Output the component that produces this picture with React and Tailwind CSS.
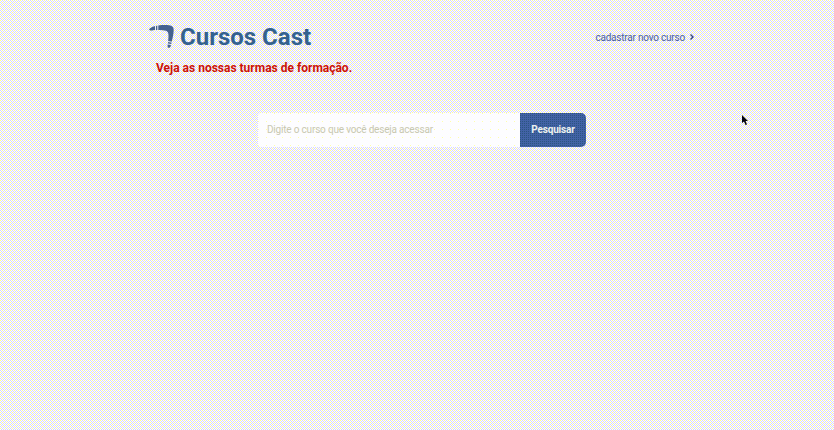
import React from "react";

const grain =
  "bg-white bg-[image:conic-gradient(from_0deg_at_1px_1px,transparent_75%,#ffff90_0),conic-gradient(from_0deg_at_1px_1px,transparent_75%,#ffff90_0),conic-gradient(from_0deg_at_1px_1px,transparent_75%,#d5d5ff_0),conic-gradient(from_0deg_at_1px_1px,transparent_75%,#d5d5ff_0)] bg-[size:4px_4px,4px_4px,2px_2px,2px_2px] bg-[position:0_0,2px_2px,0_0,1px_1px]";

const fieldGrain =
  "bg-[#fdfdff] bg-[image:conic-gradient(from_0deg_at_1px_1px,transparent_75%,#ffffaa_0)] bg-[size:8px_8px]";

const buttonGrain =
  "bg-[#4262a6] bg-[image:conic-gradient(from_0deg_at_1px_1px,transparent_75%,#2b5580_0)] bg-[size:2px_2px]";

function Boomerang() {
  return (
    <svg viewBox="0 0 26 26" className="h-[26px] w-[26px] shrink-0" aria-hidden="true">
      <path
        d="M.3 5.100C2 3.300 5 2 9 1.500c4-.5 8-.6 11-.3 3.200.3 4.700 1.900 4.700 4.800-.1 5-1.600 10.500-3.100 16.400-.6 2-3.200 1.800-3-.2.4-4.700 1.200-8.900.8-12.200-.3-2.500-1.600-3.500-3.900-3.600C11 6.100 6.500 5.800 2.800 6.400 1.200 6.700 0 6.500 .3 5.100Z"
        fill="#45628f"
      />
      <path d="M6.500 1.500v5M8.800 1v5.300M18.300 17.400l5.300.9M18 19.800l5 .9" stroke="#f0f0f8" strokeWidth="1" />
    </svg>
  );
}

export default function App() {
  return (
    <div className={`relative h-[430px] w-full overflow-hidden font-[Roboto,sans-serif] ${grain}`}>
      <div className="ml-[149px] w-[546px] pt-[23px]">
        <header className="flex items-center justify-between">
          <div className="flex items-center gap-[5px]">
            <Boomerang />
            <h1 className="pt-px text-2xl leading-[27px] font-bold text-[#34628f]">Cursos Cast</h1>
          </div>
          <a className="flex items-center gap-1 text-[10px] tracking-[-0.21px] text-[#4a5fa0]">
            cadastrar novo curso
            <svg viewBox="0 0 6 8" className="h-2 w-1.5" fill="none" stroke="#34457f" strokeWidth="1.4">
              <path d="M1.500 1.500 4 4 1.500 6.500" />
            </svg>
          </a>
        </header>
        <h2 className="mt-[9px] ml-[7px] text-xs leading-4 font-bold text-[#cc1208]">
          Veja as nossas turmas de formação.
        </h2>
        <form className="mt-[37px] ml-[109px] flex h-[34px] w-[328px]">
          <input
            placeholder="Digite o curso que você deseja acessar"
            className={`min-w-0 flex-1 rounded-l-[3px] px-[9px] pb-0.5 text-[10px] tracking-[-0.19px] outline-none placeholder:text-[#c8c8b0] ${fieldGrain}`}
          />
          <button
            type="button"
            className={`w-[66px] rounded-r-[5px] pb-0.5 text-[10px] font-bold tracking-[-0.18px] text-[#edf2ee] ${buttonGrain}`}
          >
            Pesquisar
          </button>
        </form>
      </div>
      <svg viewBox="0 0 7 11" className="absolute top-[115px] left-[741px] h-[11px] w-[7px]" aria-hidden="true">
        <path d="M1 0v8l2-1.500L4.500 10 6 9.400 4.600 6H7Z" fill="#050510" />
      </svg>
    </div>
  );
}
